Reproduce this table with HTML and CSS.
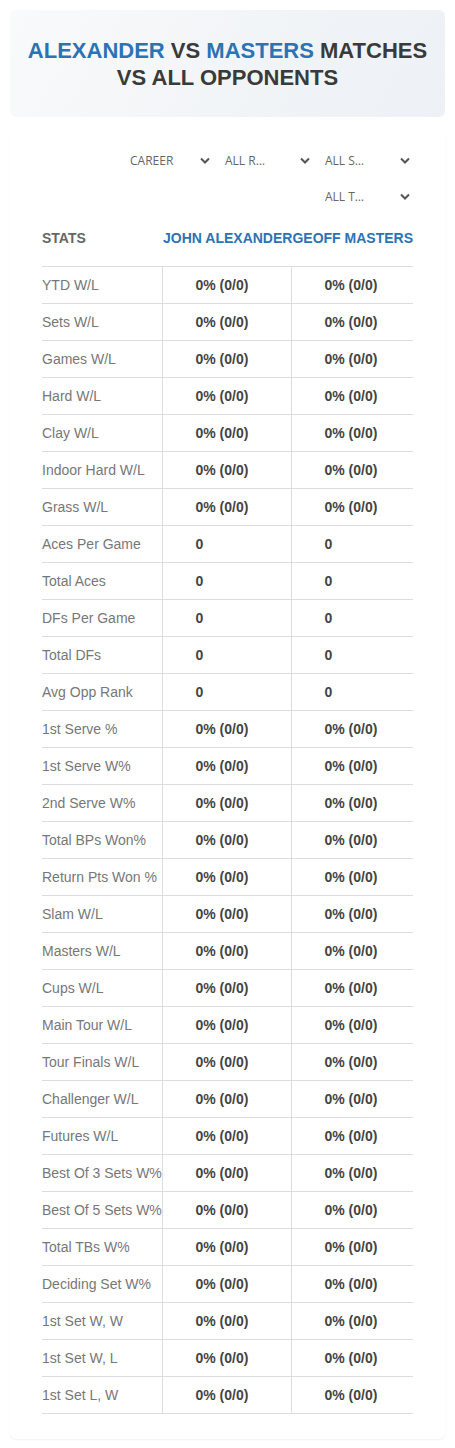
FILE: index.html
```html
<!DOCTYPE html>
<html lang="en">
<head>
    <meta charset="UTF-8" />
    <meta name="viewport" content="width=device-width, initial-scale=1.0" />
    <title>Alexander vs Masters</title>
    <link rel="stylesheet" href="styles.css">
</head>
<body>
    <div class="page-header">
        <h1><span class="player">Alexander</span> vs <span class="player">Masters</span> Matches vs All Opponents</h1>
    </div>

    <div class="stats-card">
        <div class="filters">
            <div class="filter filter-first"><span class="filter-text">Career</span><svg class="chevron" viewBox="0 0 10 6"><path d="M1 1l4 4 4-4" /></svg></div>
            <div class="filter"><span class="filter-text">All Rounds</span><svg class="chevron" viewBox="0 0 10 6"><path d="M1 1l4 4 4-4" /></svg></div>
            <div class="filter"><span class="filter-text">All Surfaces</span><svg class="chevron" viewBox="0 0 10 6"><path d="M1 1l4 4 4-4" /></svg></div>
            <div class="filter"><span class="filter-text">All Tournaments</span><svg class="chevron" viewBox="0 0 10 6"><path d="M1 1l4 4 4-4" /></svg></div>
        </div>

        <table class="stats-table">
            <colgroup>
                <col class="col-label" />
                <col class="col-player" />
                <col class="col-player2" />
            </colgroup>
            <thead>
                <tr>
                    <th class="th-stats">Stats</th>
                    <th class="th-player" colspan="2"><span>John Alexander</span><span>Geoff Masters</span></th>
                </tr>
            </thead>
            <tbody id="rows"></tbody>
        </table>
    </div>

    <script>
        const stats = [
            ["YTD W/L", "0% (0/0)"],
            ["Sets W/L", "0% (0/0)"],
            ["Games W/L", "0% (0/0)"],
            ["Hard W/L", "0% (0/0)"],
            ["Clay W/L", "0% (0/0)"],
            ["Indoor Hard W/L", "0% (0/0)"],
            ["Grass W/L", "0% (0/0)"],
            ["Aces Per Game", "0"],
            ["Total Aces", "0"],
            ["DFs Per Game", "0"],
            ["Total DFs", "0"],
            ["Avg Opp Rank", "0"],
            ["1st Serve %", "0% (0/0)"],
            ["1st Serve W%", "0% (0/0)"],
            ["2nd Serve W%", "0% (0/0)"],
            ["Total BPs Won%", "0% (0/0)"],
            ["Return Pts Won %", "0% (0/0)"],
            ["Slam W/L", "0% (0/0)"],
            ["Masters W/L", "0% (0/0)"],
            ["Cups W/L", "0% (0/0)"],
            ["Main Tour W/L", "0% (0/0)"],
            ["Tour Finals W/L", "0% (0/0)"],
            ["Challenger W/L", "0% (0/0)"],
            ["Futures W/L", "0% (0/0)"],
            ["Best Of 3 Sets W%", "0% (0/0)"],
            ["Best Of 5 Sets W%", "0% (0/0)"],
            ["Total TBs W%", "0% (0/0)"],
            ["Deciding Set W%", "0% (0/0)"],
            ["1st Set W, W", "0% (0/0)"],
            ["1st Set W, L", "0% (0/0)"],
            ["1st Set L, W", "0% (0/0)"]
        ];

        const tbody = document.getElementById("rows");
        stats.forEach(([label, value]) => {
            const tr = document.createElement("tr");
            tr.innerHTML = `<td class="label">${label}</td><td class="value">${value}</td><td class="value">${value}</td>`;
            tbody.appendChild(tr);
        });
    </script>
</body>
</html>
```

FILE: styles.css
```css
* {
    margin: 0;
    padding: 0;
    box-sizing: border-box;
}

body {
    font-family: 'Liberation Sans', Arial, sans-serif;
    background: #ffffff;
    color: #444444;
    padding: 10px;
}

.page-header {
    height: 107px;
    border-radius: 6px;
    background: linear-gradient(120deg, #f9fafb 0%, #f1f4f7 60%, #edf1f5 100%);
    display: flex;
    align-items: center;
    justify-content: center;
    padding: 0 12px;
}

.page-header h1 {
    font-size: 22px;
    line-height: 27px;
    font-weight: 700;
    text-transform: uppercase;
    text-align: center;
    color: #3a3a3a;
}

.page-header .player {
    color: #2b73b5;
}

.stats-card {
    margin-top: 13px;
    border-radius: 6px;
    box-shadow: 0 1px 2px rgba(0, 0, 0, 0.06);
    padding: 12px 32px 25px;
}

.filters {
    display: flex;
    flex-wrap: wrap;
    justify-content: flex-end;
}

.filter {
    width: 100px;
    height: 36px;
    display: flex;
    align-items: center;
    justify-content: space-between;
    padding: 0 3px 0 12px;
    font-family: 'Open Sans', 'Noto Sans', sans-serif;
    font-size: 12px;
    color: #666666;
    text-transform: uppercase;
}

.filter-first {
    width: 95px;
}

.filter-text {
    width: 47px;
    white-space: nowrap;
    overflow: hidden;
    text-overflow: ellipsis;
}

.chevron {
    width: 10px;
    height: 7px;
    fill: none;
    stroke: #555555;
    stroke-width: 2;
}

.stats-table {
    width: 100%;
    table-layout: fixed;
    border-collapse: collapse;
}

.col-label {
    width: 120px;
}

.col-player {
    width: 129px;
}

.stats-table th {
    height: 52px;
    font-size: 14px;
    font-weight: 700;
    text-transform: uppercase;
    text-align: left;
    padding-bottom: 4px;
    border-bottom: 1px solid #dddddd;
}

.th-stats {
    color: #666666;
}

.th-player {
    color: #2b73b5;
    white-space: nowrap;
    text-align: right !important;
}

.stats-table td {
    height: 37px;
    font-size: 14px;
    white-space: nowrap;
    border-bottom: 1px solid #dddddd;
}

.stats-table td.label {
    color: #777777;
}

.stats-table td.value {
    font-weight: 700;
    color: #444444;
    padding-left: 33px;
    border-left: 1px solid #dddddd;
}
```
